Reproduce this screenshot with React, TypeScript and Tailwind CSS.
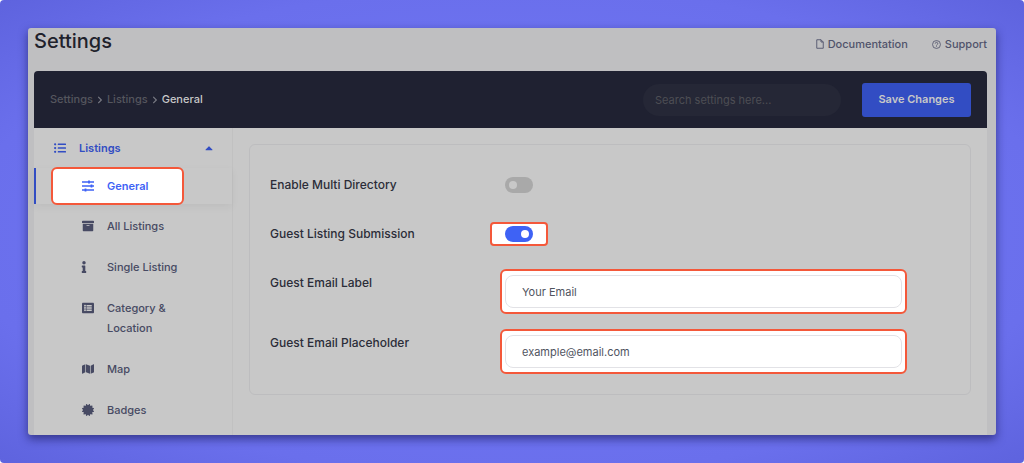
import { useState } from 'react';
import type { ReactNode } from 'react';
import { FaArchive, FaCaretUp, FaCertificate, FaChevronRight, FaInfo, FaListAlt, FaListUl, FaMap } from 'react-icons/fa';

const navItems = [
  { label: 'All Listings', icon: <FaArchive /> },
  { label: 'Single Listing', icon: <FaInfo className="-ml-2" /> },
  { label: 'Category & Location', icon: <FaListAlt /> },
  { label: 'Map', icon: <FaMap /> },
  { label: 'Badges', icon: <FaCertificate /> },
];

function SlidersIcon() {
  return (
    <svg className="size-3" viewBox="0 0 24 24" fill="none" stroke="currentColor" strokeWidth="3" aria-hidden="true">
      <path d="M0 4h24M0 12h24M0 20h24" />
      <path d="M14 1v6M19 9v6M7 17v6" strokeWidth="3.6" />
    </svg>
  );
}

function FileIcon() {
  return (
    <svg className="h-[10px] w-2" viewBox="0 0 16 20" fill="none" stroke="currentColor" strokeWidth="1.8" aria-hidden="true">
      <path d="M1.5 1.5h8.5l4.5 4.5v12.5h-13zM10 1.5V6h4.5" />
    </svg>
  );
}

function HelpIcon() {
  return (
    <svg className="size-[9px]" viewBox="0 0 20 20" fill="none" stroke="currentColor" strokeWidth="1.8" aria-hidden="true">
      <circle cx="10" cy="10" r="8.8" />
      <path d="M7.2 8a2.8 2.8 0 1 1 4 2.5c-.9.4-1.2.8-1.2 1.8M10 14v1.6" />
    </svg>
  );
}

function Toggle({ id, on, onChange }: { id: string; on: boolean; onChange: (on: boolean) => void }) {
  return (
    <span className="relative block h-4 w-7">
      <input
        id={id}
        type="checkbox"
        role="switch"
        checked={on}
        onChange={(e) => onChange(e.target.checked)}
        className="block h-4 w-7 appearance-none rounded-full bg-[#a9a9a9] checked:bg-[#3e62f5]"
      />
      <span
        className={`pointer-events-none absolute top-1 size-2 rounded-full ${on ? 'right-1 bg-white' : 'left-1 bg-[#c8c8c8]'}`}
      />
    </span>
  );
}

function Row({ id, label, top, children }: { id: string; label: string; top?: boolean; children: ReactNode }) {
  return (
    <div className={`flex ${top ? 'items-start' : 'items-center'}`}>
      <label htmlFor={id} className={`w-[220px] shrink-0 text-xs leading-5 font-medium text-[#2b2d38] ${top ? 'pt-1' : ''}`}>
        {label}
      </label>
      {children}
    </div>
  );
}

function TextField({ id, value }: { id: string; value: string }) {
  return (
    <div className="mr-[43px] ml-[10px] flex-1 rounded-md border-2 border-[#f4583a] bg-white px-[3px] py-1">
      <input
        id={id}
        type="text"
        defaultValue={value}
        className="block h-[33px] w-full rounded-lg border border-[#e2e2e6] bg-white px-4 text-[11px] text-[#50545f] outline-none"
      />
    </div>
  );
}

export default function App() {
  const [multi, setMulti] = useState(false);
  const [guest, setGuest] = useState(true);

  return (
    <div className="rounded-[4px] bg-[radial-gradient(ellipse_at_center,#6e74f2_40%,#6a6fec_75%,#5e63de_100%)] p-7 font-['Inter','Liberation_Sans',sans-serif]">
      <main className="overflow-hidden rounded-[3px] bg-[#bfbfc1] pr-[9px] pl-[6px] shadow-[0_4px_10px_rgba(20,20,80,0.6)]">
        <header className="flex h-[43px] items-start justify-between">
          <h1 className="text-xl leading-[27px] font-medium text-[#1f222c]">Settings</h1>
          <nav className="flex gap-6 pt-[6px] text-[11px] leading-5 font-medium text-[#50536b]">
            <a href="#docs" className="flex items-center gap-1">
              <FileIcon />
              Documentation
            </a>
            <a href="#support" className="flex items-center gap-1">
              <HelpIcon />
              Support
            </a>
          </nav>
        </header>

        <div className="flex h-[57px] items-center rounded-t bg-[#1f2131] px-4">
          <nav aria-label="Breadcrumb" className="flex flex-1 items-center gap-[3px] text-[11px] font-medium text-[#55565e]">
            <a href="#settings">Settings</a>
            <FaChevronRight className="size-2 text-[#777882]" />
            <a href="#listings">Listings</a>
            <FaChevronRight className="size-2 text-[#777882]" />
            <span className="text-[#c8c8c8]">General</span>
          </nav>
          <input
            type="search"
            aria-label="Search settings"
            placeholder="Search settings here..."
            className="mr-[21px] h-8 w-[198px] rounded-full bg-[#252736] px-3 text-[11px] text-[#c8c8c8] outline-none placeholder:text-[#4d4e54]"
          />
          <button type="button" className="h-[34px] w-[109px] rounded-[3px] bg-[#324dc3] text-[11px] font-semibold text-[#c8c8c8]">
            Save Changes
          </button>
        </div>

        <div className="flex bg-[#c8c8c8]">
          <aside className="w-[199px] shrink-0 border-r border-[#c1c1c1] text-[11px] leading-5 font-medium text-[#474a63]">
            <button type="button" className="flex h-10 w-full items-center pr-[17px] pl-5 font-semibold text-[#324dc3]">
              <FaListUl className="size-3" />
              <span className="ml-[13px] flex-1 text-left">Listings</span>
              <FaCaretUp className="size-3" />
            </button>
            <div className="mb-[2px] flex h-9 border-l-2 border-[#324dc3] pl-[15px] shadow-[0_3px_8px_rgba(0,0,0,0.05)]">
              <a
                href="#general"
                className="-my-px flex w-[133px] items-center gap-[13px] rounded-md border-2 border-[#f4583a] bg-white pl-[29px] font-semibold text-[#3e62f5]"
              >
                <SlidersIcon />
                General
              </a>
            </div>
            <ul className="space-y-px pb-1">
              {navItems.map((item) => (
                <li key={item.label}>
                  <a href="#" className="flex gap-[13px] py-[10px] pr-10 pl-12">
                    <span className="flex h-5 w-3 shrink-0 items-center justify-center text-xs">{item.icon}</span>
                    <span>{item.label}</span>
                  </a>
                </li>
              ))}
            </ul>
          </aside>

          <section className="min-w-0 flex-1 px-4 pt-4 pb-10">
            <form className="rounded-md border border-[#bdbdbf] px-5 pt-7 pb-5">
              <Row id="multi" label="Enable Multi Directory">
                <div className="px-[15px] py-1">
                  <Toggle id="multi" on={multi} onChange={setMulti} />
                </div>
              </Row>
              <div className="mt-[25px]">
                <Row id="guest" label="Guest Listing Submission">
                  <div className="rounded border-2 border-[#f4583a] bg-white px-[13px] py-[2px]">
                    <Toggle id="guest" on={guest} onChange={setGuest} />
                  </div>
                </Row>
              </div>
              <div className="mt-[23px] space-y-[15px]">
                <Row id="email-label" label="Guest Email Label" top>
                  <TextField id="email-label" value="Your Email" />
                </Row>
                <Row id="email-placeholder" label="Guest Email Placeholder" top>
                  <TextField id="email-placeholder" value="example@email.com" />
                </Row>
              </div>
            </form>
          </section>
        </div>
      </main>
    </div>
  );
}
